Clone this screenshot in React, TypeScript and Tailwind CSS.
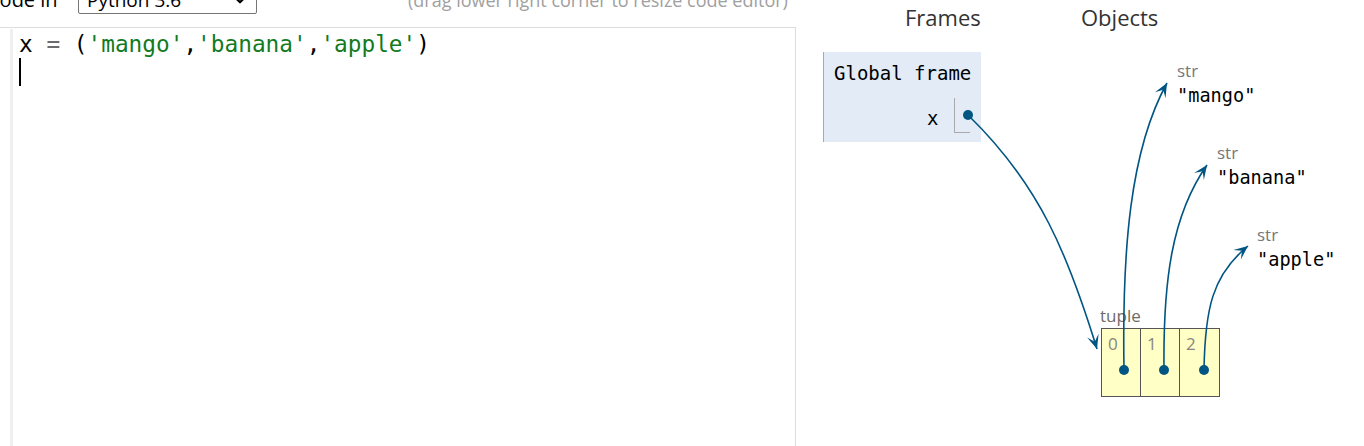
import React from "react";
import { ChevronDown } from "lucide-react";

const BLUE = "#005583";
const mono = { fontFamily: '"DejaVu Sans Mono", "Liberation Mono", monospace' };

// arrowhead polygon at (tx,ty), pointing away from control point (cx,cy)
const arrowHead = (cx: number, cy: number, tx: number, ty: number) => {
  const dx = tx - cx;
  const dy = ty - cy;
  const len = Math.hypot(dx, dy);
  const ux = dx / len;
  const uy = dy / len;
  const nx = -uy;
  const ny = ux;
  const L = 14;
  const W = 6;
  const pts = [
    [tx, ty],
    [tx - ux * L + nx * W, ty - uy * L + ny * W],
    [tx - ux * L * 0.55, ty - uy * L * 0.55],
    [tx - ux * L - nx * W, ty - uy * L - ny * W],
  ];
  return pts.map((p) => p.join(",")).join(" ");
};

const arrows = [
  { from: [968, 115], c1: [1040, 185], c2: [1068, 255], to: [1097, 349] },
  { from: [1124, 370], c1: [1122, 250], c2: [1130, 150], to: [1167, 83] },
  { from: [1164, 370], c1: [1163, 280], c2: [1172, 215], to: [1207, 165] },
  { from: [1204, 370], c1: [1205, 310], c2: [1212, 275], to: [1248, 246] },
];

const TopBar = () => (
  <div className="h-[27px] overflow-hidden">
    <div className="flex items-center h-[28px] -mt-[14px] whitespace-nowrap" style={{ fontFamily: '"Open Sans", sans-serif' }}>
      <span className="-ml-[13px] w-[91px] text-[20px] text-black">Code in</span>
      <div className="w-[179px] h-[28px] border border-[#767676] rounded-[2px] flex items-center justify-between pl-[8px] pr-[7px] text-[19px] text-black">
        <span>Python 3.6</span>
        <ChevronDown size={18} strokeWidth={3} />
      </div>
      <span className="ml-[151px] text-[18px] text-[#a0a0a0]">(drag lower right corner to resize code editor)</span>
    </div>
  </div>
);

const Editor = () => (
  <div className="h-[419px] w-[796px] border-t border-r border-[#dcdcdc] flex">
    <div className="w-[10px]" />
    <div className="w-[3px] mt-[1px] bg-[#efefef]" />
    <div className="pl-[6px] pt-[2px] text-[22.75px] leading-[28px]" style={mono}>
      <div className="whitespace-pre">
        <span className="text-black">x </span>
        <span className="text-[#6b6b6b]">=</span>
        <span className="text-black"> (</span>
        <span className="text-[#127a1f]">'mango'</span>
        <span className="text-black">,</span>
        <span className="text-[#127a1f]">'banana'</span>
        <span className="text-black">,</span>
        <span className="text-[#127a1f]">'apple'</span>
        <span className="text-black">)</span>
      </div>
      <div className="h-[28px] w-[2px] bg-black" />
    </div>
  </div>
);

const StrObj = ({ left, top, value }: { left: number; top: number; value: string }) => (
  <div className="absolute" style={{ left, top }}>
    <div className="text-[17px] leading-[20px] text-[#777]" style={{ fontFamily: '"Open Sans", sans-serif' }}>str</div>
    <div className="mt-[3px] text-[18.6px] leading-[24px] text-black whitespace-pre" style={mono}>"{value}"</div>
  </div>
);

const Viz = () => (
  <div className="relative flex-1 h-[446px]" style={{ fontFamily: '"Open Sans", sans-serif' }}>
    <div className="absolute left-[109px] top-[2px] text-[22px] leading-[30px] text-[#333]">Frames</div>
    <div className="absolute left-[285px] top-[2px] text-[22px] leading-[30px] text-[#333]">Objects</div>

    <div className="absolute left-[27px] top-[52px] w-[158px] h-[90px] bg-[#e2ebf6] border-l border-[#aaa]">
      <div className="pl-[10px] pt-[10px] text-[19px] leading-[22px] text-black whitespace-pre" style={mono}>Global frame</div>
      <div className="absolute left-[103px] top-[55px] text-[19px] leading-[22px] text-black" style={mono}>x</div>
      <div className="absolute left-[130px] top-[46px] w-[16px] h-[35px] border-l border-b border-[#aaa]" />
    </div>

    <StrObj left={381} top={61} value="mango" />
    <StrObj left={421} top={143} value="banana" />
    <StrObj left={461} top={225} value="apple" />

    <div className="absolute left-[304px] top-[306px] text-[17px] leading-[20px] text-[#6e6a66]">tuple</div>
    <div className="absolute left-[305px] top-[328px] h-[69px] flex border border-[#555] bg-[#ffffc6]">
      {["0", "1", "2"].map((i, idx) => (
        <div key={i} className={`w-[39px] h-full pl-[6px] pt-[5px] text-[17px] leading-[20px] text-[#8a8580] ${idx < 2 ? "border-r border-[#555]" : ""}`}>
          {i}
        </div>
      ))}
    </div>
  </div>
);

const App = () => (
  <div className="relative w-[1364px] h-[446px] bg-white overflow-hidden">
    <div className="flex">
      <div>
        <TopBar />
        <Editor />
      </div>
      <Viz />
    </div>
    <svg className="absolute inset-0 pointer-events-none" width="1364" height="446" viewBox="0 0 1364 446">
      {arrows.map((a, i) => (
        <g key={i}>
          <path
            d={`M${a.from[0]},${a.from[1]} C${a.c1[0]},${a.c1[1]} ${a.c2[0]},${a.c2[1]} ${a.to[0]},${a.to[1]}`}
            fill="none"
            stroke={BLUE}
            strokeWidth={1.6}
          />
          <polygon points={arrowHead(a.c2[0], a.c2[1], a.to[0], a.to[1])} fill={BLUE} />
          <circle cx={a.from[0]} cy={a.from[1]} r={5} fill={BLUE} />
        </g>
      ))}
    </svg>
  </div>
);

export default App;
